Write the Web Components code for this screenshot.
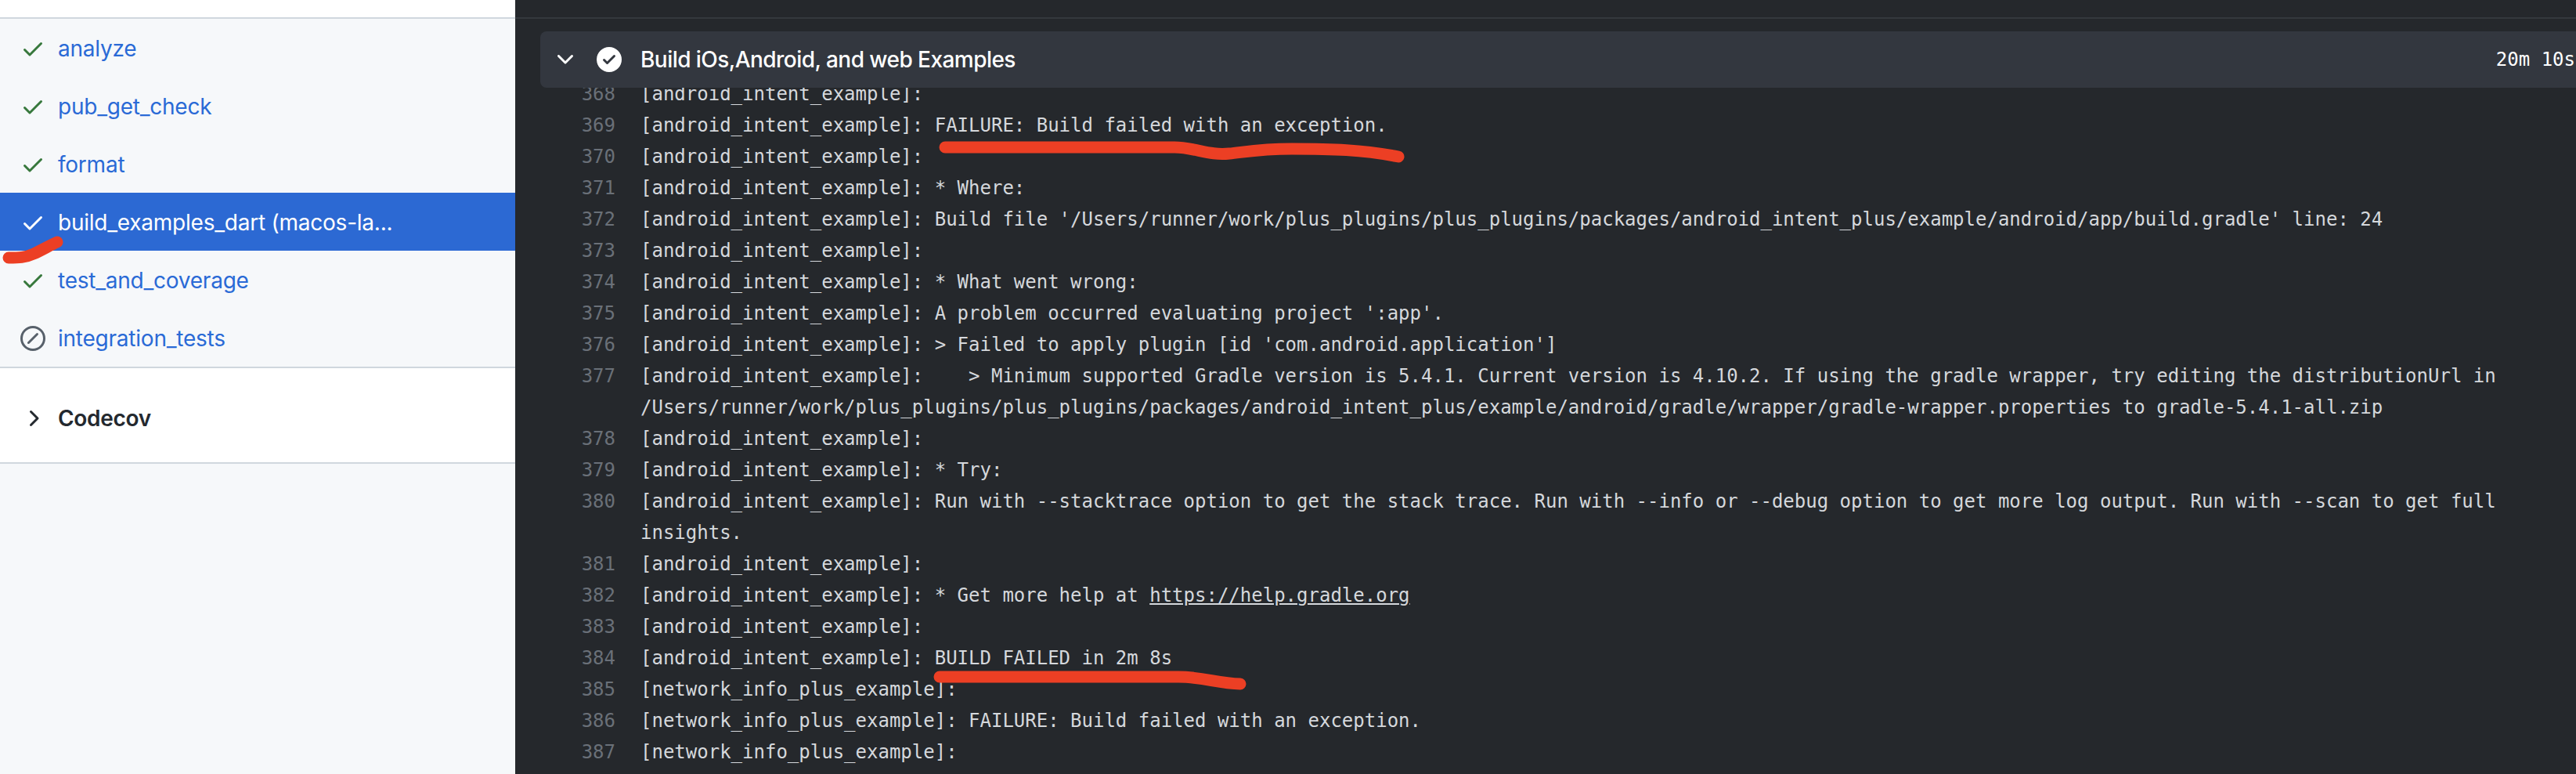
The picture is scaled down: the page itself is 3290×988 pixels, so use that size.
<!DOCTYPE html>
<html>
<head>
<meta charset="utf-8">
<title>Build iOs,Android, and web Examples</title>
<style>
  html, body { margin: 0; height: 100%; overflow: hidden; background: #25282c; }
  a { color: inherit; }
</style>
</head>
<body>

<script>
const ICONS = {
  check: 'M13.78 4.22a.75.75 0 0 1 0 1.06l-7.25 7.25a.75.75 0 0 1-1.06 0L2.22 9.28a.751.751 0 0 1 .018-1.042.751.751 0 0 1 1.042-.018L6 10.94l6.72-6.72a.75.75 0 0 1 1.06 0Z',
  skip: 'M8 0a8 8 0 1 1 0 16A8 8 0 0 1 8 0ZM1.5 8a6.5 6.5 0 1 0 13 0 6.5 6.5 0 0 0-13 0Zm9.78-2.22-5.5 5.5a.749.749 0 0 1-1.275-.326.749.749 0 0 1 .215-.734l5.5-5.5a.751.751 0 0 1 1.042.018.751.751 0 0 1 .018 1.042Z',
  right: 'M6.22 3.22a.75.75 0 0 1 1.06 0l4.25 4.25a.75.75 0 0 1 0 1.06l-4.25 4.25a.751.751 0 0 1-1.042-.018.751.751 0 0 1-.018-1.042L9.94 8 6.22 4.28a.75.75 0 0 1 0-1.06Z',
  down: 'M12.78 5.22a.749.749 0 0 1 0 1.06l-4.25 4.25a.75.75 0 0 1-1.06 0L3.22 6.28a.749.749 0 0 1 .326-1.275.749.749 0 0 1 .734.215L8 8.939l3.72-3.719a.749.749 0 0 1 1.06 0Z',
  circle: 'M8 16A8 8 0 1 1 8 0a8 8 0 0 1 0 16Zm3.78-9.72a.751.751 0 0 0-.018-1.042.751.751 0 0 0-1.042-.018L6.75 9.19 5.28 7.72a.751.751 0 0 0-1.042.018.751.751 0 0 0-.018 1.042l2 2a.75.75 0 0 0 1.06 0Z'
}

function icon(name) {
  return `<svg width="32" height="32" viewBox="0 0 16 16" fill="currentColor"><path d="${ICONS[name]}"/></svg>`
}

// one job in the left list
class JobRow extends HTMLElement {
  constructor() {
    super()
    this.attachShadow({ mode: 'open' })
  }
  connectedCallback() {
    const skipped = this.hasAttribute('skipped')
    this.shadowRoot.innerHTML = `
      <style>
        :host {
          display: flex;
          align-items: center;
          gap: 16px;
          box-sizing: border-box;
          height: 74px;
          padding: 2px 0 0 26px;
          font: 400 28px Inter, "Liberation Sans", sans-serif;
          letter-spacing: -0.23px;
          color: #2a6ad6;
        }
        :host([active]) { background: #2c69d3; color: #fff; }
        .ic { display: flex; color: ${skipped ? '#57606a' : '#37783c'}; }
        :host([active]) .ic { color: #fff; }
        .name { white-space: nowrap; }
      </style>
      <span class="ic">${icon(skipped ? 'skip' : 'check')}</span>
      <span class="name"><slot></slot></span>
    `
  }
}

// collapsed group in the left list
class JobGroup extends HTMLElement {
  constructor() {
    super()
    this.attachShadow({ mode: 'open' })
    this.shadowRoot.innerHTML = `
      <style>
        :host {
          display: flex;
          align-items: center;
          gap: 16px;
          box-sizing: border-box;
          height: 124px;
          padding: 7px 0 0 26px;
          background: #fff;
          border-top: 2px solid #d0d7de;
          border-bottom: 2px solid #d0d7de;
          font: 600 28px Inter, "Liberation Sans", sans-serif;
          letter-spacing: -0.3px;
          color: #24292f;
        }
        .ic { display: flex; }
      </style>
      <span class="ic">${icon('right')}</span>
      <slot></slot>
    `
  }
}

class JobSidebar extends HTMLElement {
  constructor() {
    super()
    this.attachShadow({ mode: 'open' })
    this.shadowRoot.innerHTML = `
      <style>
        :host {
          display: block;
          width: 658px;
          flex: none;
          background: #f6f8fa;
        }
        .top { height: 22px; background: #fff; border-bottom: 2px solid #d0d7de; }
      </style>
      <div class="top"></div>
      <slot></slot>
    `
  }
}

// header bar of the open step
class StepHeader extends HTMLElement {
  constructor() {
    super()
    this.attachShadow({ mode: 'open' })
  }
  connectedCallback() {
    this.shadowRoot.innerHTML = `
      <style>
        :host {
          display: flex;
          align-items: center;
          position: relative;
          z-index: 1;
          height: 72px;
          margin-left: 32px;
          padding: 0 1px 0 16px;
          background: #33373f;
          border-radius: 8px 0 0 8px;
          color: #fff;
          font: 500 28px Inter, "Liberation Sans", sans-serif;
          letter-spacing: -0.55px;
        }
        .ic { display: flex; margin-right: 24px; }
        .title { flex: 1; }
        .time { font: 24px "DejaVu Sans Mono", monospace; letter-spacing: 0; }
      </style>
      <span class="ic">${icon('down')}</span>
      <span class="ic">${icon('circle')}</span>
      <span class="title"><slot></slot></span>
      <span class="time">${this.getAttribute('time')}</span>
    `
  }
}

// one numbered log line
class LogLine extends HTMLElement {
  constructor() {
    super()
    this.attachShadow({ mode: 'open' })
  }
  connectedCallback() {
    this.shadowRoot.innerHTML = `
      <style>
        :host {
          display: flex;
          font: 24px/40px "DejaVu Sans Mono", monospace;
          color: #d5d8dc;
        }
        .num { width: 128px; flex: none; text-align: right; color: #6a7078; }
        .text { margin-left: 32px; flex: 1; min-width: 0; white-space: pre-wrap; }
      </style>
      <span class="num">${this.getAttribute('n')}</span>
      <span class="text"><slot></slot></span>
    `
  }
}

class StepLog extends HTMLElement {
  constructor() {
    super()
    this.attachShadow({ mode: 'open' })
    this.shadowRoot.innerHTML = `
      <style>
        :host {
          display: block;
          margin-top: -12px;
        }
      </style>
      <slot></slot>
    `
  }
}

class LogPane extends HTMLElement {
  constructor() {
    super()
    this.attachShadow({ mode: 'open' })
    this.shadowRoot.innerHTML = `
      <style>
        :host {
          display: block;
          flex: 1;
          min-width: 0;
          background: #25282c;
        }
        .top { height: 22px; border-bottom: 2px solid #34383d; margin-bottom: 16px; }
      </style>
      <div class="top"></div>
      <slot></slot>
    `
  }
}

class JobPage extends HTMLElement {
  constructor() {
    super()
    this.attachShadow({ mode: 'open' })
    this.shadowRoot.innerHTML = `
      <style>
        :host {
          display: flex;
          height: 988px;
          overflow: hidden;
        }
      </style>
      <slot></slot>
    `
  }
}

// the red marker strokes somebody drew on the screenshot
class MarkerStrokes extends HTMLElement {
  constructor() {
    super()
    this.attachShadow({ mode: 'open' })
    this.shadowRoot.innerHTML = `
      <style>
        :host { position: absolute; left: 0; top: 0; z-index: 2; pointer-events: none; }
        svg { display: block; }
        path { fill: none; stroke: #ec3f24; stroke-width: 15; stroke-linecap: round; stroke-linejoin: round; }
      </style>
      <svg width="3290" height="988">
        <path d="M11 329 C24 329 32 329 43 324 C54 319 64 313 73 309"/>
        <path d="M1207 188 L1500 188 C1525 188 1545 199 1570 196 C1590 194 1610 190 1650 190 C1700 190 1740 191 1786 200"/>
        <path d="M1200 864 L1505 864 C1535 864 1555 872 1584 873"/>
      </svg>
    `
  }
}

customElements.define('job-row', JobRow)
customElements.define('job-group', JobGroup)
customElements.define('job-sidebar', JobSidebar)
customElements.define('step-header', StepHeader)
customElements.define('log-line', LogLine)
customElements.define('step-log', StepLog)
customElements.define('log-pane', LogPane)
customElements.define('job-page', JobPage)
customElements.define('marker-strokes', MarkerStrokes)
</script>

<job-page>
  <job-sidebar>
    <job-row>analyze</job-row>
    <job-row>pub_get_check</job-row>
    <job-row>format</job-row>
    <job-row active>build_examples_dart (macos-la...</job-row>
    <job-row>test_and_coverage</job-row>
    <job-row skipped>integration_tests</job-row>
    <job-group>Codecov</job-group>
  </job-sidebar>
  <log-pane>
    <step-header time="20m 10s">Build iOs,Android, and web Examples</step-header>
    <step-log>
      <log-line n="368">[android_intent_example]:</log-line>
      <log-line n="369">[android_intent_example]: FAILURE: Build failed with an exception.</log-line>
      <log-line n="370">[android_intent_example]:</log-line>
      <log-line n="371">[android_intent_example]: * Where:</log-line>
      <log-line n="372">[android_intent_example]: Build file '/Users/runner/work/plus_plugins/plus_plugins/packages/android_intent_plus/example/android/app/build.gradle' line: 24</log-line>
      <log-line n="373">[android_intent_example]:</log-line>
      <log-line n="374">[android_intent_example]: * What went wrong:</log-line>
      <log-line n="375">[android_intent_example]: A problem occurred evaluating project ':app'.</log-line>
      <log-line n="376">[android_intent_example]: &gt; Failed to apply plugin [id 'com.android.application']</log-line>
      <log-line n="377">[android_intent_example]:    &gt; Minimum supported Gradle version is 5.4.1. Current version is 4.10.2. If using the gradle wrapper, try editing the distributionUrl in /Users/runner/work/plus_plugins/plus_plugins/packages/android_intent_plus/example/android/gradle/wrapper/gradle-wrapper.properties to gradle-5.4.1-all.zip</log-line>
      <log-line n="378">[android_intent_example]:</log-line>
      <log-line n="379">[android_intent_example]: * Try:</log-line>
      <log-line n="380">[android_intent_example]: Run with --stacktrace option to get the stack trace. Run with --info or --debug option to get more log output. Run with --scan to get full insights.</log-line>
      <log-line n="381">[android_intent_example]:</log-line>
      <log-line n="382">[android_intent_example]: * Get more help at <a href="#">https://help.gradle.org</a></log-line>
      <log-line n="383">[android_intent_example]:</log-line>
      <log-line n="384">[android_intent_example]: BUILD FAILED in 2m 8s</log-line>
      <log-line n="385">[network_info_plus_example]:</log-line>
      <log-line n="386">[network_info_plus_example]: FAILURE: Build failed with an exception.</log-line>
      <log-line n="387">[network_info_plus_example]:</log-line>
    </step-log>
  </log-pane>
</job-page>
<marker-strokes></marker-strokes>

</body>
</html>
